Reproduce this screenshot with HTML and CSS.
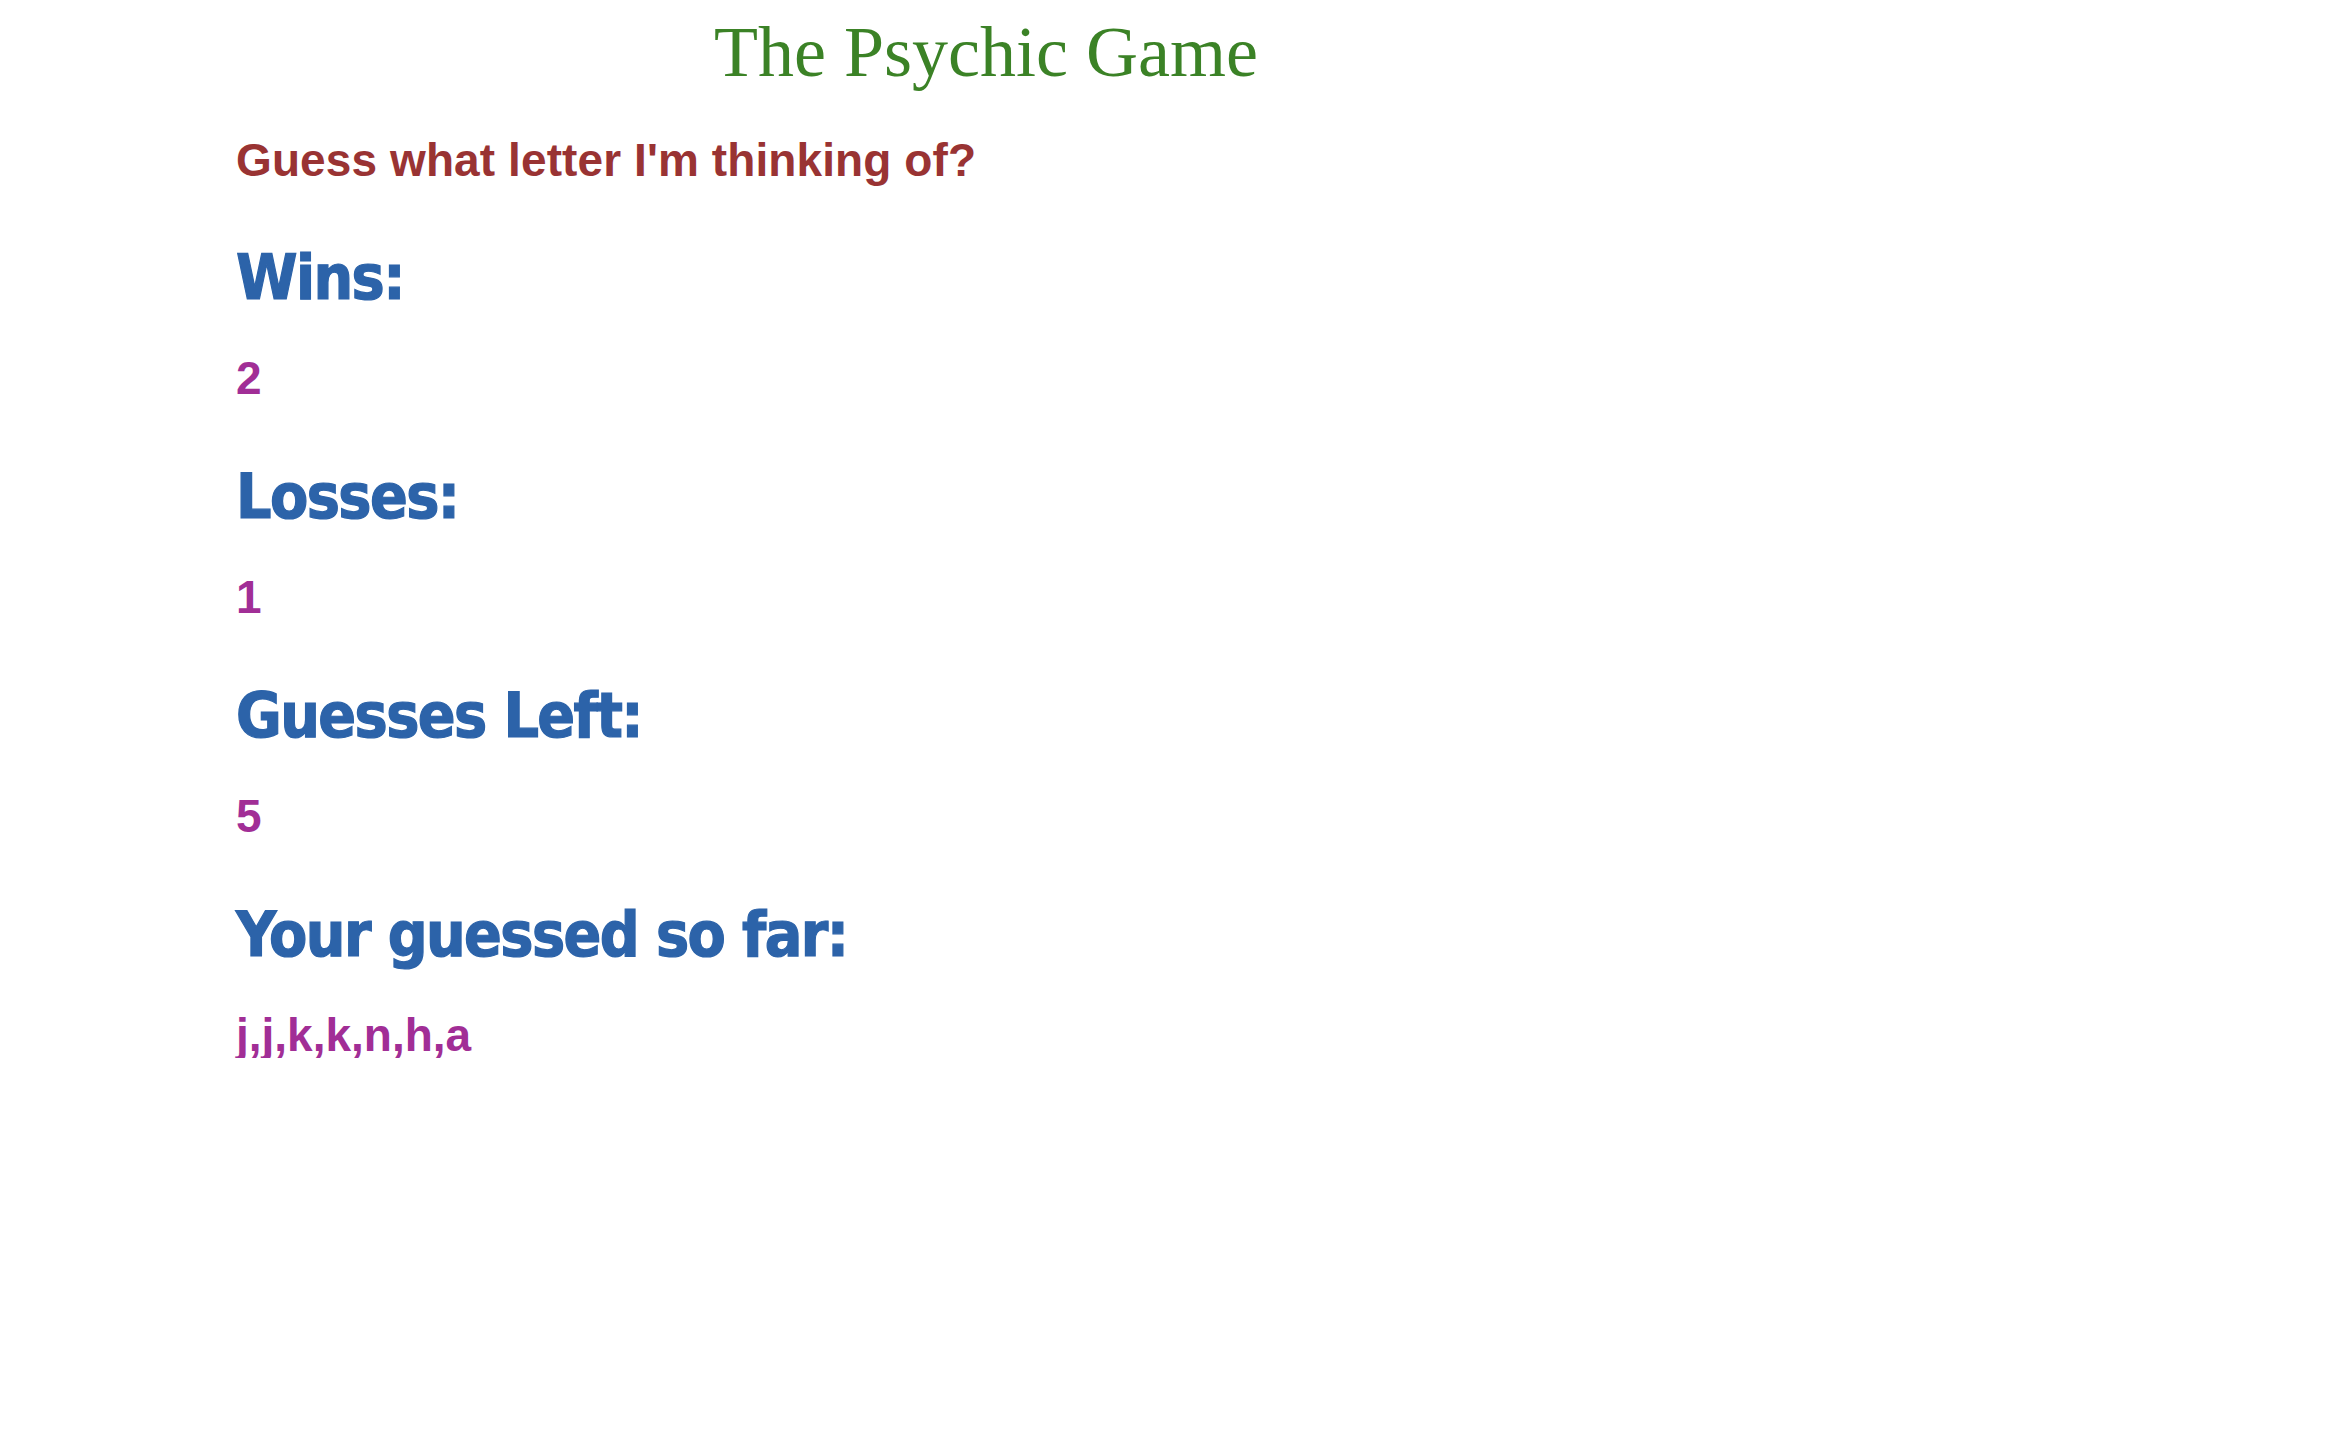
FILE: index.html
```html
<!DOCTYPE html>
<html lang="en">
<head>
<meta charset="utf-8">
<title>The Psychic Game</title>
<link rel="stylesheet" href="styles.css">
</head>
<body>
<div class="container">
  <h1 class="title">The Psychic Game</h1>
  <p class="prompt">Guess what letter I'm thinking of?</p>
  <section class="stat">
    <h2 class="label">Wins:</h2>
    <p class="value">2</p>
  </section>
  <section class="stat">
    <h2 class="label">Losses:</h2>
    <p class="value">1</p>
  </section>
  <section class="stat">
    <h2 class="label">Guesses Left:</h2>
    <p class="value">5</p>
  </section>
  <section class="stat">
    <h2 class="label">Your guessed so far:</h2>
    <p class="value">j,j,k,k,n,h,a</p>
  </section>
</div>
</body>
</html>
```

FILE: styles.css
```css
html, body {
  margin: 0;
  padding: 0;
  background: #ffffff;
}

.container {
  width: 1500px;
  padding: 16px 0 0 236px;
  display: flex;
  flex-direction: column;
}

.title {
  margin: 0;
  font-family: "Liberation Serif", "Times New Roman", serif;
  font-weight: normal;
  font-size: 72px;
  line-height: 72px;
  color: #3b8226;
  text-align: center;
}

.prompt {
  margin: 49px 0 0 0;
  font-family: "Liberation Sans", Arial, sans-serif;
  font-weight: bold;
  font-size: 46px;
  line-height: 46px;
  letter-spacing: 0.1px;
  color: #993333;
}

.stat {
  margin-top: 64px;
  display: flex;
  flex-direction: column;
  gap: 46px;
}

.stat + .stat {
  margin-top: 65px;
}

.label {
  margin: 0;
  font-family: "DejaVu Sans Condensed", "DejaVu Sans", sans-serif;
  font-weight: bold;
  font-size: 62px;
  line-height: 62px;
  letter-spacing: -1.6px;
  -webkit-text-stroke: 1.2px #2c63a9;
  color: #2c63a9;
}

.value {
  margin: 0;
  font-family: "Liberation Sans", Arial, sans-serif;
  font-weight: bold;
  font-size: 46px;
  line-height: 46px;
  color: #a12e96;
}
```
